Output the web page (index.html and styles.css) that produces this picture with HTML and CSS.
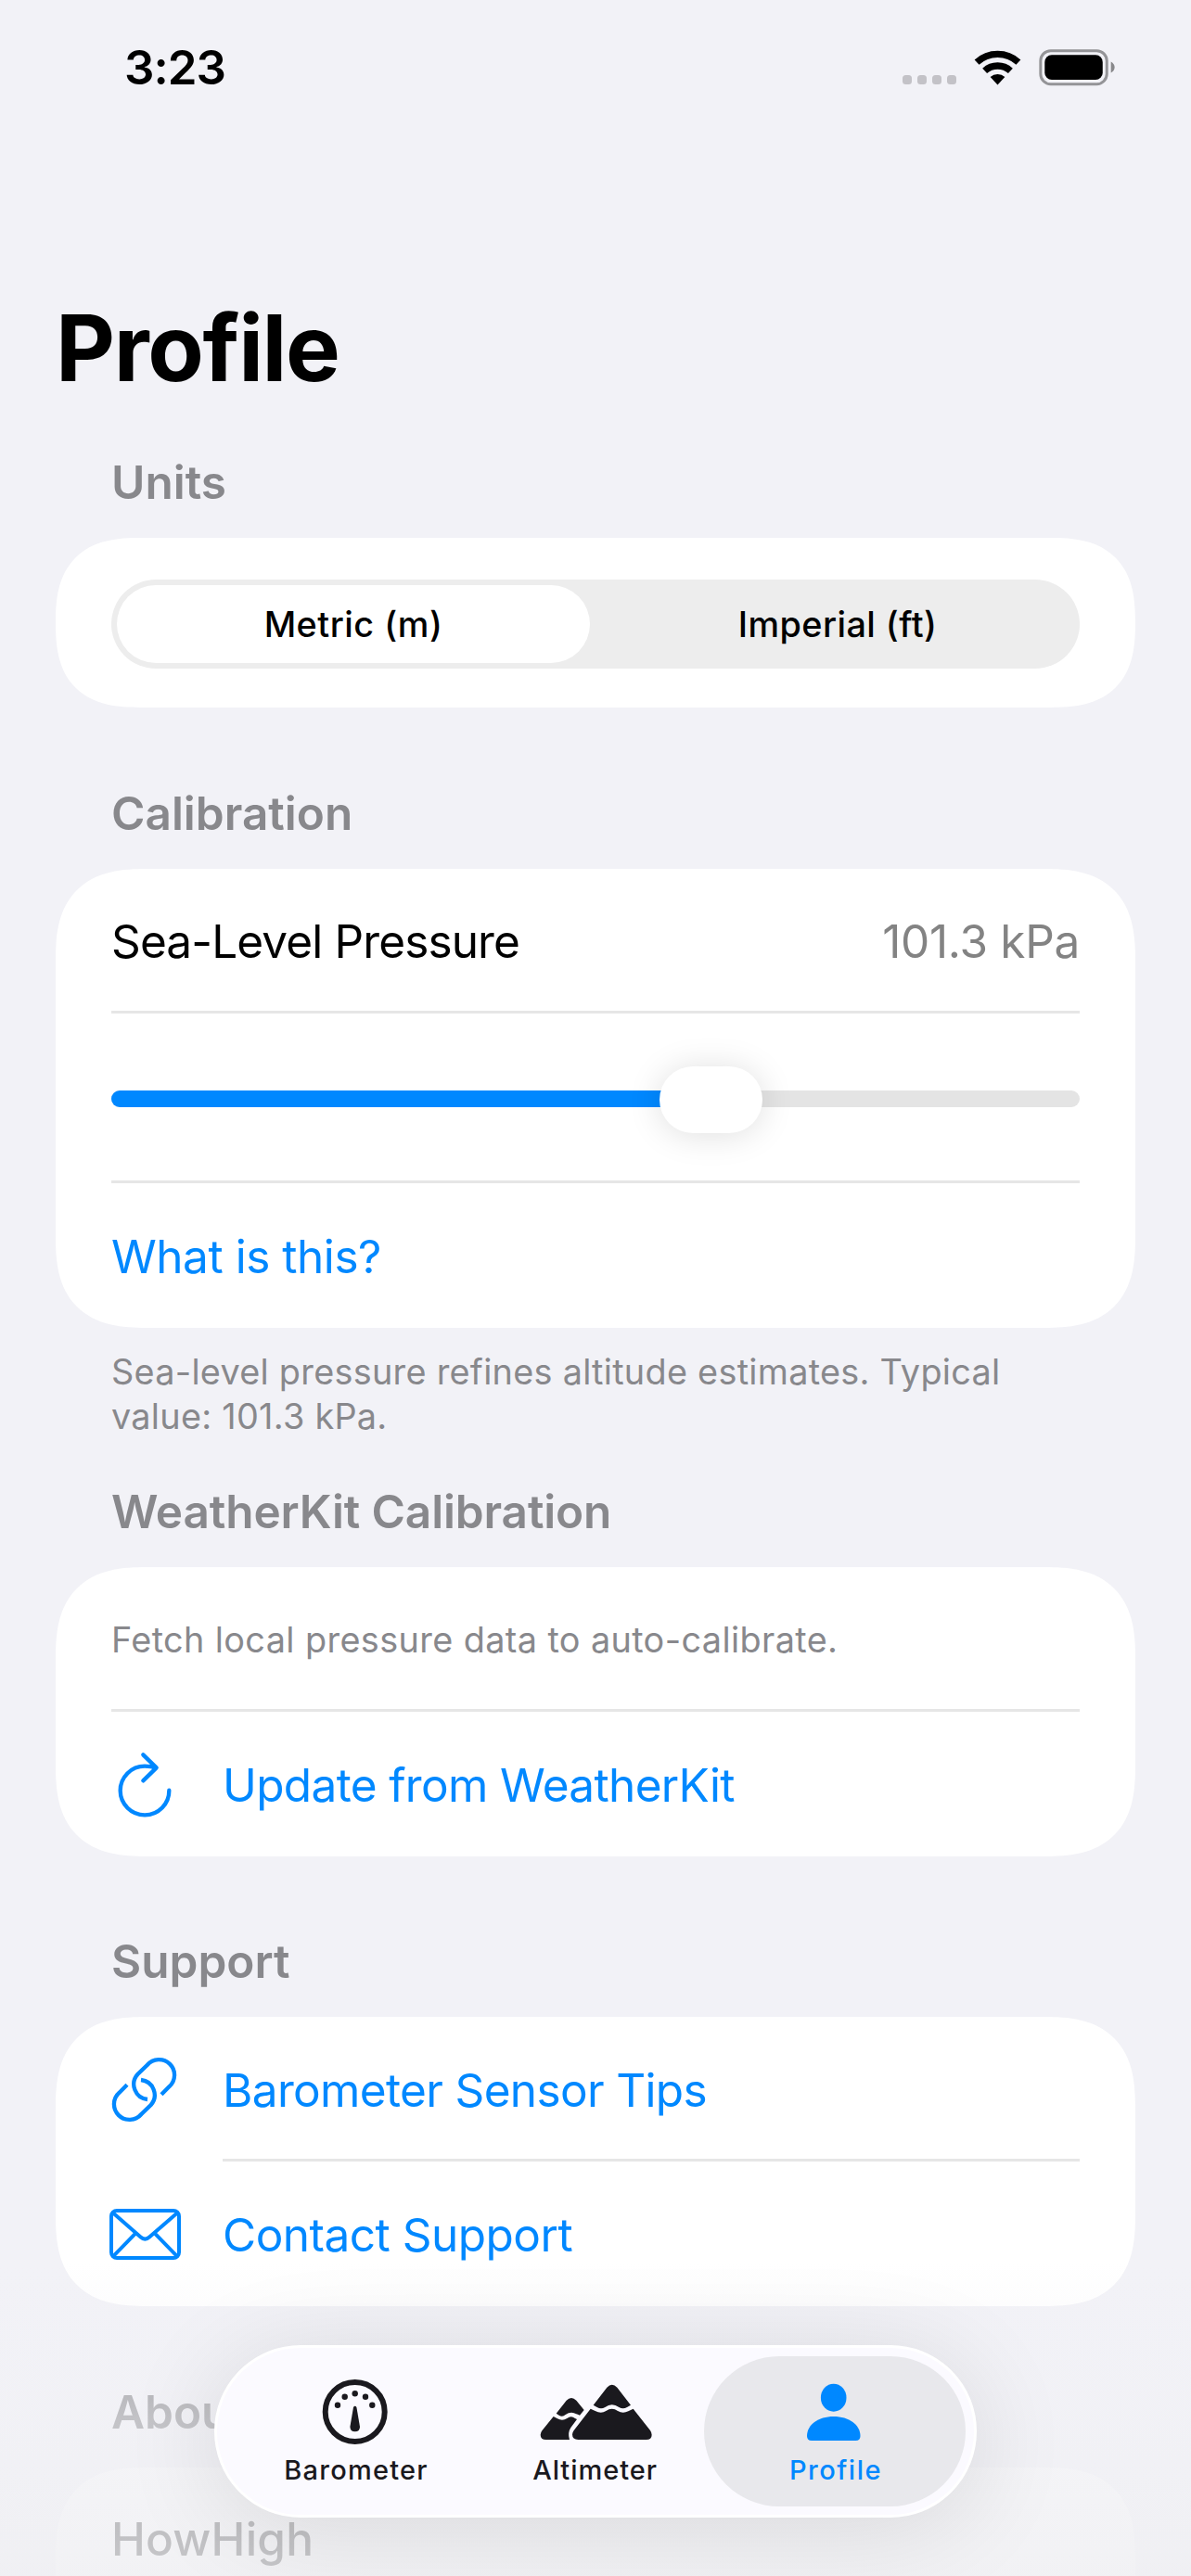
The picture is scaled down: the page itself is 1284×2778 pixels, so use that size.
FILE: index.html
```html
<!DOCTYPE html>
<html lang="en">
<head>
<meta charset="utf-8">
<title>Profile</title>
<link rel="stylesheet" href="styles.css">
</head>
<body>
<div class="screen">
  <header class="status">
    <span class="time">3:23</span>
    <div class="status-icons">
      <div class="dots"><i></i><i></i><i></i><i></i></div>
      <svg class="wifi" viewBox="450 100 154 114"><g fill="none" stroke="#000" stroke-width="22"><path d="M459.4 139.3A100 100 0 0 1 594.6 139.3"/><path d="M485.1 167.3A62 62 0 0 1 568.9 167.3"/></g><path d="M527 213L503.3 187.2A35 35 0 0 1 550.7 187.2Z"/></svg>
      <svg class="battery" viewBox="660 98 246 118"><rect x="664.5" y="103" width="216" height="109" rx="33" fill="none" stroke="#949497" stroke-width="9"/><rect x="678" y="117" width="189" height="81" rx="23"/><path d="M894 139Q906 146 906 157Q906 169 894 175Z" fill="#88888b"/></svg>
    </div>
  </header>

  <main>
    <h1>Profile</h1>

    <section class="units">
      <h2>Units</h2>
      <div class="card seg-card">
        <div class="segmented">
          <span class="segment selected">Metric (m)</span>
          <span class="segment">Imperial (ft)</span>
        </div>
      </div>
    </section>

    <section class="calibration">
      <h2>Calibration</h2>
      <div class="card">
        <div class="row"><div class="cell line split"><span class="label-tight">Sea-Level Pressure</span><span class="value">101.3 kPa</span></div></div>
        <div class="row slider-row"><div class="cell line">
          <div class="slider"><div class="fill"></div><div class="thumb"></div></div>
        </div></div>
        <div class="row"><div class="cell link">What is this?</div></div>
      </div>
      <p class="footnote">Sea-level pressure refines altitude estimates. Typical<br>value: 101.3 kPa.</p>
    </section>

    <section class="weather">
      <h2 class="long">WeatherKit Calibration</h2>
      <div class="card">
        <div class="row"><div class="cell line note">Fetch local pressure data to auto-calibrate.</div></div>
        <div class="row link">
          <div class="icon"><svg viewBox="60 84 216 216"><path d="M247 212A79 79 0 1 1 168 134Q189 134 204 139M163 97L206 139L163 181" fill="none" stroke="currentColor" stroke-width="13" stroke-linecap="round" stroke-linejoin="round"/></svg></div>
          <div class="cell">Update from WeatherKit</div>
        </div>
      </div>
    </section>

    <section class="support">
      <h2>Support</h2>
      <div class="card">
        <div class="row link">
          <div class="icon"><svg viewBox="60 81 216 216"><path d="M222 206L247 181A50 50 0 1 0 176 111L145 141A49 49 0 0 0 177 222M111 175L86 200A50 50 0 1 0 157 270L188 240A49 49 0 0 0 156 159" fill="none" stroke="currentColor" stroke-width="13"/></svg></div>
          <div class="cell line">Barometer Sensor Tips</div>
        </div>
        <div class="row link">
          <div class="icon"><svg viewBox="60 549 216 216"><g fill="none" stroke="currentColor" stroke-width="12"><rect x="60" y="582" width="219" height="153" rx="18"/><path d="M65 589L154 667Q169 681 184 667L274 589M65 731L138 656M274 731L201 656"/></g></svg></div>
          <div class="cell contact">Contact Support</div>
        </div>
      </div>
    </section>

    <section class="about">
      <h2>About</h2>
      <div class="card">
        <div class="row"><div class="cell app-name">HowHigh</div></div>
      </div>
    </section>
  </main>

  <div class="fade"></div>

  <nav class="tabbar">
    <a class="tab">
      <svg viewBox="1 0 120 72"><circle cx="59.7" cy="36" r="32" fill="none" stroke="currentColor" stroke-width="6"/><g fill="currentColor"><circle cx="41" cy="28.7" r="3.2"/><circle cx="48.7" cy="19.7" r="3.2"/><circle cx="59.7" cy="16.3" r="3.2"/><circle cx="71" cy="19.7" r="3.2"/><circle cx="78.3" cy="28.7" r="3.2"/><path d="M58 31Q59.7 28.5 61.4 31L65 52Q65 57.3 59.7 57.3Q54.4 57.3 54.4 52Z"/></g></svg>
      <span>Barometer</span>
    </a>
    <a class="tab">
      <svg viewBox="726 45 360 216" fill="currentColor"><path d="M899 131L943 74Q959 57 976 74L1020 131L1008 138Q995 146 982 138Q959 121 937 138Q924 146 911 138Z"/><path d="M890 143L905 150Q924 160 940 150Q959 136 978 150Q994 160 1012 151L1028 143L1083 213Q1088 220 1088 227Q1088 243 1070 243H850Q831 243 831 226Q831 220 836 213Z"/><path d="M779 158L812 116Q828 100 844 116L869 147L855 164Q848 161 844 160Q827 149 809 162Q799 171 788 164Z"/><path d="M770 168L783 175Q799 184 814 174Q827 163 840 174L846 177L826 204Q815 221 822 243H746Q728 243 728 227Q728 221 733 214Z"/></svg>
      <span class="mid">Altimeter</span>
    </a>
    <a class="tab active">
      <svg viewBox="0 0 120 72" fill="currentColor"><ellipse cx="58.7" cy="20.7" rx="13.8" ry="15"/><path d="M30 62C30 50 42 41 58.7 41S87.5 50 87.5 62Q87.5 67 82.5 67H35Q30 67 30 62Z"/></svg>
      <span class="last">Profile</span>
    </a>
  </nav>
</div>
</body>
</html>
```
FILE: styles.css
```css
* { box-sizing: border-box; }
body {
  margin: 0;
  background: #f2f2f7;
  font-family: Inter, "Liberation Sans", sans-serif;
  font-size: 49.5px;
  color: #000;
}
.screen {
  position: relative;
  width: 1284px;
  height: 2778px;
  overflow: hidden;
  background: #f2f2f7;
}
svg { display: block; overflow: visible; }

.status {
  height: 145px;
  padding: 0 82px 0 134px;
  display: flex;
  justify-content: space-between;
  align-items: center;
}
.time { font-size: 51px; line-height: 60px; font-weight: 600; letter-spacing: -0.99px; }
.status-icons { display: flex; align-items: center; gap: 19px; }
.dots { display: flex; gap: 6px; padding-top: 27px; }
.dots i { width: 10px; height: 10px; border-radius: 3.5px; background: #c3c2c7; }
.wifi { width: 51px; height: 38px; }
.battery { width: 82px; height: 39px; }

main { padding: 0 60px; }
h1 {
  margin: 170px 0 55px;
  font-size: 98.9px;
  line-height: 120px;
  font-weight: 700;
  letter-spacing: -1.4px;
}
h2 {
  margin: 0;
  padding: 0 60px 30px;
  font-size: 49.5px;
  line-height: 60px;
  font-weight: 600;
  letter-spacing: 0;
  color: #88888c;
}
h2.long { letter-spacing: -0.13px; }
section { padding-bottom: 84px; }
.weather { padding-bottom: 83px; }
.calibration { padding-bottom: 49px; }

.card {
  background: #fff;
  border-radius: 98px;
  corner-shape: superellipse(1.38);
}
.seg-card { height: 183px; padding: 45px 60px 42px; }
.segmented {
  height: 96px;
  padding: 6px;
  display: grid;
  grid-template-columns: 1fr 1fr;
  gap: 12px;
  border-radius: 48px;
  background: #ededed;
}
.segment {
  display: flex;
  align-items: center;
  justify-content: center;
  border-radius: 42px;
  font-size: 37.8px;
  font-weight: 450;
  letter-spacing: 0.45px;
}
.segment.selected { background: #fff; font-weight: 550; letter-spacing: 0.5px; }

.row { height: 156px; padding: 0 60px; display: flex; }
.cell { flex: 1; display: flex; align-items: center; }
.line { box-shadow: inset 0 -3px #e6e6e6; }
.split { justify-content: space-between; }
.label-tight { letter-spacing: -0.87px; }
.value { color: #838383; letter-spacing: -0.3px; }
.link { color: #08f; letter-spacing: -0.65px; }
.link .cell, .cell.link { padding-top: 2px; }
.cell.link { letter-spacing: -0.46px; }
.contact { letter-spacing: -0.5px; }
.icon { width: 120px; display: flex; align-items: center; }
.icon svg { width: 72px; height: 72px; }
.note { font-size: 37.8px; letter-spacing: 0.39px; color: #88888c; }
.footnote {
  margin: 23px 0 0;
  padding: 0 60px;
  font-size: 37.8px;
  line-height: 48px;
  letter-spacing: 0.28px;
  color: #88888c;
}
.slider-row { height: 183px; }
.slider {
  position: relative;
  flex: 1;
  height: 18px;
  border-radius: 9px;
  background: #e4e4e4;
}
.fill { width: 62%; height: 100%; border-radius: 9px; background: #08f; }
.thumb {
  position: absolute;
  left: 62%;
  top: 50%;
  width: 111px;
  height: 72px;
  margin: -35px 0 0 -56px;
  border-radius: 36px;
  background: #fff;
  box-shadow: 0 2px 36px rgba(0, 0, 0, 0.13);
}
.app-name { font-weight: 550; letter-spacing: 0.2px; color: #58585a; }
.about .row { height: 153px; }
.about .card { height: 400px; background: #f9f9fb; }

.fade {
  position: absolute;
  left: 0;
  right: 0;
  bottom: 0;
  height: 338px;
  background: linear-gradient(rgba(241, 241, 245, 0), rgba(241, 241, 245, 0.56) 50%, rgba(239, 239, 242, 0.74));
}
.tabbar {
  position: absolute;
  left: 231px;
  top: 2529px;
  width: 822px;
  height: 186px;
  padding: 9px;
  display: flex;
  border: 3px solid #fff;
  border-radius: 93px;
  background: #fbfaff;
  box-shadow: 0 12px 110px rgba(0, 0, 0, 0.11);
}
.tab {
  flex: none;
  width: 282px;
  height: 162px;
  padding-top: 24px;
  display: flex;
  flex-direction: column;
  align-items: center;
  gap: 9px;
  border-radius: 81px;
  color: #1a191e;
  font-size: 29px;
  line-height: 36px;
  font-weight: 500;
  letter-spacing: 1.25px;
}
.tab + .tab { margin-left: -24px; }
.tab svg { width: 120px; height: 72px; }
.tab .mid { letter-spacing: 0.95px; margin-left: -1px; }
.tab .last { letter-spacing: 1.5px; margin-left: 2px; }
.tab.active { background: #e8e8ec; color: #08f; }
```
